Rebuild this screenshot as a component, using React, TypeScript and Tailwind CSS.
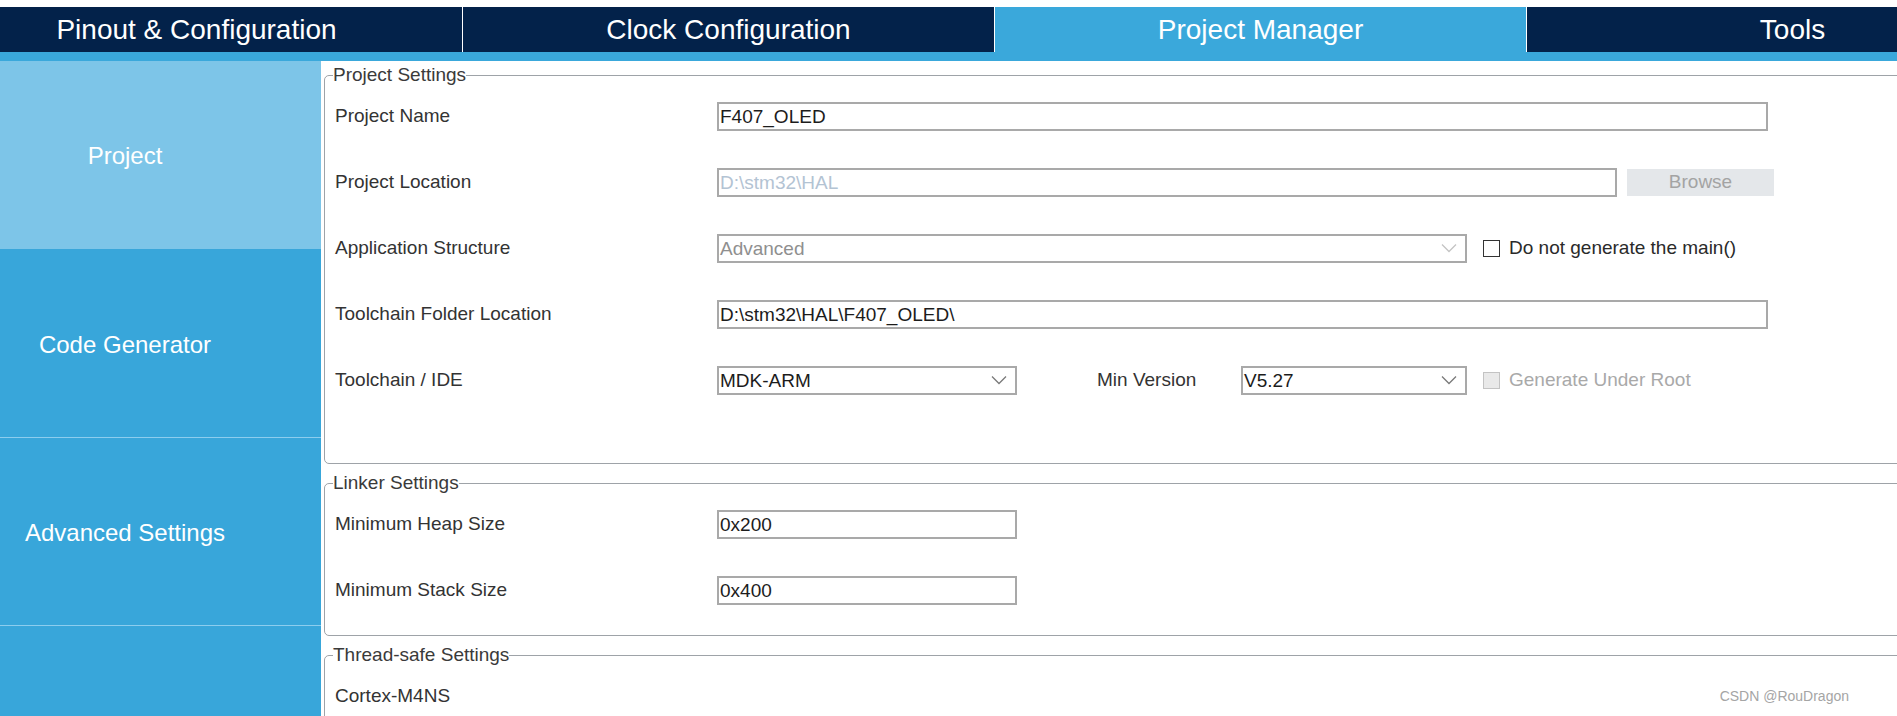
import React from "react";

const tabs = ["Pinout & Configuration", "Clock Configuration", "Project Manager", "Tools"];

function Chevron({ color }: { color: string }) {
  return (
    <svg width="16" height="10" viewBox="0 0 16 10" fill="none" className="shrink-0">
      <polyline points="1,1.5 8,8.5 15,1.5" stroke={color} strokeWidth="1.3" />
    </svg>
  );
}

function TextBox({ value, width, muted }: { value: string; width: string; muted?: boolean }) {
  return (
    <div
      className={`flex h-[29px] items-center border-2 border-[#a9a9a9] bg-white px-[1px] text-[19px] leading-none ${width} ${
        muted ? "text-[#b3c3d3]" : "text-[#1c1c1c]"
      }`}
    >
      {value}
    </div>
  );
}

function Select({ value, width, disabled }: { value: string; width: string; disabled?: boolean }) {
  return (
    <div
      className={`flex h-[29px] items-center justify-between border-2 border-[#a9a9a9] bg-white pl-[1px] pr-[8px] text-[19px] leading-none ${width} ${
        disabled ? "text-[#8f8f8f]" : "text-[#1c1c1c]"
      }`}
    >
      <span>{value}</span>
      <Chevron color={disabled ? "#c4c4c4" : "#7a7a7a"} />
    </div>
  );
}

function Check({ label, disabled }: { label: string; disabled?: boolean }) {
  return (
    <div className="ml-[16px] flex items-center gap-[9px]">
      <div
        className={`h-[17px] w-[17px] border ${
          disabled ? "border-[#c3c3c3] bg-[#e9e9e9]" : "border-[#333] bg-white"
        }`}
      />
      <span className={`text-[19px] ${disabled ? "text-[#a9a9a9]" : "text-[#2a2a2a]"}`}>{label}</span>
    </div>
  );
}

function Row({ label, children }: { label: string; children?: React.ReactNode }) {
  return (
    <div className="flex h-[66px] items-center pl-[10px]">
      <div className="w-[382px] shrink-0 text-[19px] text-[#333]">{label}</div>
      {children}
    </div>
  );
}

function Group({ title, className, children }: { title: string; className?: string; children: React.ReactNode }) {
  return (
    <fieldset className={`-mr-6 rounded-[5px] border border-[#9ea3a8] pl-[8px] ${className ?? ""}`}>
      <legend className="text-[19px] leading-[20px] text-[#3a3a3a]">{title}</legend>
      <div className="-mt-[2px] -ml-[8px]">{children}</div>
    </fieldset>
  );
}

export default function App() {
  return (
    <div className="relative h-[716px] w-[1897px] overflow-hidden bg-white font-['Liberation_Sans',Arial,sans-serif]">
      {/* top tabs */}
      <div className="mt-[7px] flex h-[45px] gap-px bg-white -ml-[69px]">
        {tabs.map((t) => (
          <div
            key={t}
            className={`flex w-[531px] shrink-0 items-center justify-center text-[28px] text-white ${
              t === "Project Manager" ? "bg-[#3aa8db]" : "bg-[#03224a]"
            }`}
          >
            {t}
          </div>
        ))}
      </div>
      <div className="h-[9px] bg-[#3aa8db]" />

      <div className="flex">
        {/* sidebar */}
        <div className="w-[321px] shrink-0 bg-[#38a6da] text-[24px] text-white">
          <div className="flex h-[188px] items-center justify-center bg-[#7dc5e8] pt-[2px] pr-[71px]">Project</div>
          <div className="flex h-[188px] items-center justify-center pt-[4px] pr-[71px]">Code Generator</div>
          <div className="flex h-[188px] items-center justify-center border-t border-[#8ccdee] pt-[2px] pr-[71px]">
            Advanced Settings
          </div>
          <div className="h-[120px] border-t border-[#8ccdee]" />
        </div>

        {/* content */}
        <div className="min-w-0 flex-1 overflow-hidden pl-[3px]">
          <Group title="Project Settings" className="mt-[4px] pb-[50px]">
            <Row label="Project Name">
              <TextBox value="F407_OLED" width="w-[1051px]" />
            </Row>
            <Row label="Project Location">
              <TextBox value="D:\stm32\HAL" width="w-[900px]" muted />
              <div className="ml-[10px] flex h-[27px] w-[147px] items-center justify-center bg-[#e4e7ea] text-[19px] text-[#a3a3a3]">
                Browse
              </div>
            </Row>
            <Row label="Application Structure">
              <Select value="Advanced" width="w-[750px]" disabled />
              <Check label="Do not generate the main()" />
            </Row>
            <Row label="Toolchain Folder Location">
              <TextBox value="D:\stm32\HAL\F407_OLED\" width="w-[1051px]" />
            </Row>
            <Row label="Toolchain / IDE">
              <Select value="MDK-ARM" width="w-[300px]" />
              <div className="ml-[80px] w-[144px] shrink-0 text-[19px] text-[#333]">Min Version</div>
              <Select value="V5.27" width="w-[226px]" />
              <Check label="Generate Under Root" disabled />
            </Row>
          </Group>

          <Group title="Linker Settings" className="mt-[9px] pb-[12px]">
            <Row label="Minimum Heap Size">
              <TextBox value="0x200" width="w-[300px]" />
            </Row>
            <Row label="Minimum Stack Size">
              <TextBox value="0x400" width="w-[300px]" />
            </Row>
          </Group>

          <Group title="Thread-safe Settings" className="mt-[9px] pb-[20px]">
            <Row label="Cortex-M4NS" />
          </Group>
        </div>
      </div>

      <div className="absolute bottom-[9px] right-[48px] text-[14px] text-[#a5a5a5]">CSDN @RouDragon</div>
    </div>
  );
}
